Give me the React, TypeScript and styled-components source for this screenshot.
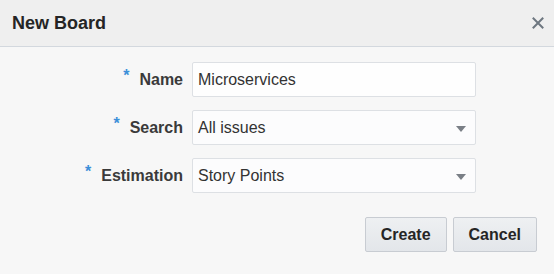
import React, { FC } from 'react';
import styled, { createGlobalStyle } from 'styled-components';

const GlobalStyle = createGlobalStyle`
  html, body {
    margin: 0;
    padding: 0;
    background: #f7f7f7;
  }
  body {
    font-family: "Liberation Sans", Arial, sans-serif;
    color: #333;
  }
`;

const Dialog = styled.div`
  width: 554px;
  height: 274px;
  background: #f7f7f7;
  display: flex;
  flex-direction: column;
`;

const Header = styled.div`
  height: 46px;
  flex: none;
  display: flex;
  align-items: center;
  justify-content: space-between;
  padding: 0 9px 0 12px;
  background: #efefef;
  border-bottom: 1px solid #d3d8de;
`;

const Title = styled.h1`
  margin: 0;
  font-size: 18px;
  font-weight: bold;
  color: #252525;
`;

const Close = styled.button`
  width: 14px;
  height: 14px;
  padding: 0;
  border: 0;
  background: none;
  display: flex;
  align-items: center;
  justify-content: center;
  cursor: pointer;
`;

const Body = styled.div`
  padding: 15px 17px 0 0;
  display: flex;
  flex-direction: column;
`;

const Form = styled.div`
  display: grid;
  grid-template-columns: 183px 284px;
  column-gap: 9px;
  row-gap: 13px;
`;

const Label = styled.label`
  display: flex;
  align-items: center;
  justify-content: flex-end;
  font-size: 16px;
  font-weight: bold;
  color: #3a3a3a;
  height: 35px;
`;

const Required = styled.span`
  color: #3c8fd9;
  font-size: 16px;
  margin-right: 10px;
  position: relative;
  top: -4px;
`;

const Field = styled.div<{ $select?: boolean }>`
  height: 35px;
  box-sizing: border-box;
  border: 1px solid #dde0e4;
  border-radius: 2px;
  background: ${(p) => (p.$select ? '#fcfcfd' : '#fefefe')};
  display: flex;
  align-items: center;
  justify-content: space-between;
  padding: 0 9px 0 5px;
  font-size: 16px;
  color: #333;
`;

const Arrow = styled.span`
  width: 0;
  height: 0;
  border-left: 5px solid transparent;
  border-right: 5px solid transparent;
  border-top: 6px solid #7a7f86;
  margin-top: 2px;
`;

const Actions = styled.div`
  display: flex;
  justify-content: flex-end;
  gap: 6px;
  margin-top: 24px;
`;

const Button = styled.button`
  height: 35px;
  padding: 0 15px;
  box-sizing: border-box;
  border: 1px solid #c8ccd2;
  border-radius: 2px;
  background: linear-gradient(#eef0f2, #e3e6ea);
  font-family: "Liberation Sans", Arial, sans-serif;
  font-size: 16px;
  font-weight: bold;
  color: #252525;
  cursor: pointer;
`;

const rows = [
  { label: 'Name', value: 'Microservices', select: false },
  { label: 'Search', value: 'All issues', select: true },
  { label: 'Estimation', value: 'Story Points', select: true },
];

const App: FC = () => (
  <>
    <GlobalStyle />
    <Dialog>
      <Header>
        <Title>New Board</Title>
        <Close aria-label="Close">
          <svg width="12" height="12" viewBox="0 0 12 12">
            <path d="M1.5 1.5 L10.5 10.5 M10.5 1.5 L1.5 10.5" stroke="#6e7780" strokeWidth="2" strokeLinecap="square" />
          </svg>
        </Close>
      </Header>
      <Body>
        <Form>
          {rows.map((row) => (
            <React.Fragment key={row.label}>
              <Label>
                <Required>*</Required>
                {row.label}
              </Label>
              <Field $select={row.select}>
                <span>{row.value}</span>
                {row.select && <Arrow />}
              </Field>
            </React.Fragment>
          ))}
        </Form>
        <Actions>
          <Button>Create</Button>
          <Button>Cancel</Button>
        </Actions>
      </Body>
    </Dialog>
  </>
);

export default App;
